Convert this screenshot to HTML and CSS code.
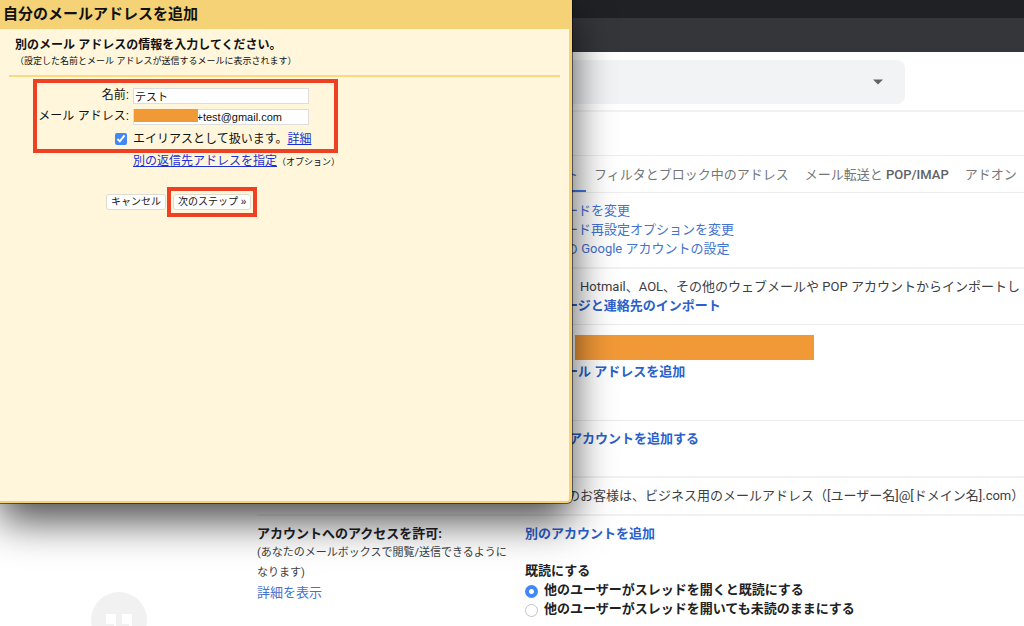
FILE: index.html
```html
<!DOCTYPE html>
<html lang="ja">
<head>
<meta charset="utf-8">
<title>自分のメールアドレスを追加</title>
<link rel="stylesheet" href="styles.css">
</head>
<body>
<div class="page">
  <div class="tabstrip"></div>
  <div class="toolbar"></div>
  <header class="topbar">
    <div class="search">
      <button class="search-options" type="button" aria-label="検索オプション">
        <svg width="10" height="6" viewBox="0 0 10 6"><path d="M0 .5h10L5 5.5z" fill="#5f6368"/></svg>
      </button>
    </div>
  </header>
  <div class="body">
    <aside class="sidebar">
      <svg width="56" height="34" viewBox="0 0 56 34">
        <circle cx="28" cy="28" r="28" fill="#f1f1f1"/>
        <path d="M16 22h8q1 0 1 1v11h-2v-2h-8v-9q0-1 1-1zM32 22h8q1 0 1 1v11h-3v-2h-7v-9q0-1 1-1z" fill="#fff"/>
      </svg>
    </aside>
    <main class="settings">
      <div class="heading"></div>
      <nav class="tabs">
        <a class="tab active" href="#">ト</a>
        <a class="tab" href="#">フィルタとブロック中のアドレス</a>
        <a class="tab" href="#">メール転送と <b>POP/IMAP</b></a>
        <a class="tab" href="#">アドオン</a>
      </nav>
      <section class="row row-account">
        <div class="value from-middle">
          <a href="#">ードを変更</a>
          <a href="#">ード再設定オプションを変更</a>
          <a href="#">の Google アカウントの設定</a>
        </div>
      </section>
      <section class="row row-import">
        <div class="value from-middle">
          <p class="indent">Hotmail、AOL、その他のウェブメールや POP アカウントからインポートし</p>
          <a class="strong" href="#">ージと連絡先のインポート</a>
        </div>
      </section>
      <section class="row row-send">
        <div class="value from-middle">
          <div class="masked"></div>
          <a class="strong" href="#">ール アドレスを追加</a>
        </div>
      </section>
      <section class="row row-check">
        <div class="value from-edge"><a class="strong" href="#">アカウントを追加する</a></div>
      </section>
      <section class="row row-business">
        <div class="value from-edge"><p>のお客様は、ビジネス用のメールアドレス（[ユーザー名]@[ドメイン名].com）</p></div>
      </section>
      <section class="row row-access">
        <div class="label">
          <h2>アカウントへのアクセスを許可:</h2>
          <p class="note">(あなたのメールボックスで閲覧/送信できるように<br>なります)</p>
          <a href="#">詳細を表示</a>
        </div>
        <div class="value">
          <a class="strong add-account" href="#">別のアカウントを追加</a>
          <fieldset>
            <legend>既読にする</legend>
            <label><input type="radio" name="read" checked>他のユーザーがスレッドを開くと既読にする</label>
            <label><input type="radio" name="read">他のユーザーがスレッドを開いても未読のままにする</label>
          </fieldset>
        </div>
      </section>
    </main>
  </div>
</div>

<div class="popup" role="dialog" aria-labelledby="popup-title">
  <h1 id="popup-title">自分のメールアドレスを追加</h1>
  <form class="popup-body">
    <div class="intro">
      <h2>別のメール アドレスの情報を入力してください。</h2>
      <p>（設定した名前とメール アドレスが送信するメールに表示されます）</p>
    </div>
    <div class="fields">
      <label for="name">名前:</label>
      <input class="text" id="name" type="text" value="テスト">
      <label for="email">メール アドレス:</label>
      <div class="email">
        <input class="text" id="email" type="text" value="s+test@gmail.com">
        <span class="email-mask"></span>
      </div>
      <input class="check" id="alias" type="checkbox" checked>
      <div><label for="alias">エイリアスとして扱います。</label><a href="#">詳細</a></div>
      <div class="reply"><a href="#">別の返信先アドレスを指定</a><small>（オプション）</small></div>
      <div class="mark mark-fields"></div>
    </div>
    <div class="actions">
      <button type="button">キャンセル</button>
      <div class="next">
        <button type="submit">次のステップ »</button>
        <div class="mark mark-next"></div>
      </div>
    </div>
  </form>
</div>
</body>
</html>
```
FILE: styles.css
```css
* { box-sizing: border-box; }
body {
  margin: 0;
  overflow: hidden;
  background: #fff;
  color: #3c4043;
  font: 13px/19px Roboto, "Noto Sans CJK JP", sans-serif;
}
h1, h2, p, fieldset, legend { margin: 0; padding: 0; border: 0; }
a { color: #4472d0; text-decoration: none; }

.page { display: flex; flex-direction: column; height: 100vh; }
.tabstrip { flex: none; height: 18px; background: #202124; }
.toolbar { flex: none; height: 34px; background: #35363a; }
.topbar {
  flex: none;
  padding: 8px 119px 6px 257px;
  border-bottom: 2px solid #f3f3f3;
}
.search {
  display: flex;
  align-items: center;
  justify-content: flex-end;
  height: 44px;
  padding-right: 22px;
  border-radius: 8px;
  background: #f1f3f4;
}
.search-options { display: flex; padding: 0; border: 0; background: none; }

.body { display: flex; flex: 1; min-height: 0; }
.sidebar {
  display: flex;
  flex: none;
  flex-direction: column;
  justify-content: flex-end;
  width: 257px;
  padding-left: 91px;
}
.settings { flex: 1; min-width: 0; }
.heading { height: 44px; border-bottom: 1px solid #eee; }
.tabs {
  display: flex;
  gap: 16px;
  height: 37px;
  padding-left: 308px;
  border-bottom: 1px solid #eee;
  white-space: nowrap;
}
.tab { padding-top: 9px; color: #747779; }
.tab b { color: #606366; font-weight: 500; }
.tab.active { padding-right: 8px; border-bottom: 2px solid #3f7be8; color: #3f7be8; margin-right: -8px; }

.row {
  display: flex;
  padding-top: 8px;
  border-bottom: 1px solid #eaeaea;
  white-space: nowrap;
}
.value { display: flex; flex-direction: column; align-items: flex-start; }
.from-middle { padding-left: 308px; }
.from-edge { padding-left: 312px; }
.indent { padding-left: 15px; }
.strong { color: #2b5fcb; font-weight: 700; }
.row-account { height: 76px; border-bottom: 2px solid #f1f1f1; }
.row-import { height: 56px; }
.row-send { height: 96px; padding-top: 10px; }
.row-check { height: 57px; border-bottom: 2px solid #f1f1f1; }
.row-business { height: 38px; border-bottom: 2px solid #f1f1f1; }
.row-business .from-edge { padding-left: 310px; }
.row-access { border-bottom: 0; }
.masked { width: 239px; height: 25px; margin: 0 0 2px 10px; background: #f29937; }
.label { width: 268px; color: #202124; }
.label h2 { font-size: 13px; font-weight: 700; line-height: 19px; }
.note { color: #3c4043; font-size: 11px; line-height: 20px; }
.add-account { margin-bottom: 18px; }
fieldset { color: #202124; font-weight: 700; }
fieldset label { display: flex; align-items: center; gap: 6px; }
input[type="radio"] {
  width: 13px;
  height: 13px;
  margin: 3px 0 0;
  border: 1px solid #c4c4c4;
  border-radius: 50%;
  appearance: none;
  background: #fff;
}
input[type="radio"]:checked {
  border: 0;
  background: radial-gradient(circle, #fff 2px, #4187f6 3px);
}

.popup {
  position: absolute;
  top: 0;
  left: 0;
  width: calc(56% - 1px);
  height: 503px;
  border: solid #f5d276;
  border-width: 0 3px 2px 0;
  border-radius: 0 0 5px 0;
  background: #fff6dc;
  box-shadow: 0 0 0 1px rgba(0, 0, 0, .5), 0 18px 40px rgba(0, 0, 0, .7);
  color: #111;
  font: 12px/21px "Liberation Sans", "Noto Sans CJK JP", sans-serif;
}
.popup h1 {
  height: 29px;
  padding-left: 3px;
  background: #f5d276;
  font-size: 15px;
  line-height: 28px;
}
.popup-body { padding: 8px 9px 0; }
.intro { padding: 0 6px 6px; border-bottom: 2px solid #fbd980; }
.intro h2 { font-size: 12px; line-height: 17px; }
.intro p { font-size: 9px; line-height: 15px; }
.fields {
  position: relative;
  display: grid;
  grid-template-columns: 120px 1fr;
  column-gap: 4px;
  align-items: center;
  padding-top: 8px;
}
.fields > label { text-align: right; }
.fields a { color: #1a31d8; text-decoration: underline; }
.text {
  display: block;
  width: 176px;
  height: 16px;
  padding: 0 1px;
  border: 1px solid #ddd;
  background: #fff;
  color: #111;
  font: 11px/14px "Liberation Sans", "Noto Sans CJK JP", sans-serif;
}
.email { position: relative; }
.email .text { padding-left: 57px; }
.email-mask {
  position: absolute;
  top: 0;
  left: 1px;
  width: 64px;
  height: 13px;
  background: #f29937;
}
.check {
  justify-self: end;
  width: 12px;
  height: 12px;
  margin: 2px 2px 0;
  accent-color: #4187f6;
}
.check + div, .reply { padding-top: 2px; line-height: 20px; }
.reply { grid-column: 2; }
.reply small { font-size: 9px; }
.actions { display: flex; gap: 7px; padding: 22px 0 0 97px; }
.actions button {
  height: 16px;
  padding: 0 4px;
  border: 1px solid #dedbd0;
  border-radius: 3px;
  background: #fff;
  color: #111;
  font: 10px/14px "Liberation Sans", "Noto Sans CJK JP", sans-serif;
}
.next { position: relative; display: flex; }
.mark { position: absolute; border: 4px solid #ee4023; pointer-events: none; }
.mark-fields { top: 2px; left: 24px; width: 305px; height: 74px; }
.mark-next { inset: -7px -6px; }
```
